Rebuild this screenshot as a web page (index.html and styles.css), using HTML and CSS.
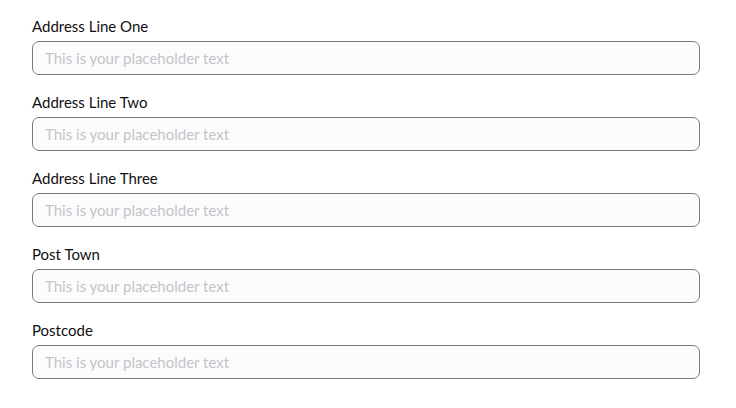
FILE: index.html
```html
<!DOCTYPE html>
<html>
<head>
<meta charset="utf-8">
<link rel="stylesheet" href="styles.css">
</head>
<body>
<form class="form">
  <div class="field">
    <label class="label">Address Line One</label>
    <input class="input" type="text" placeholder="This is your placeholder text">
  </div>
  <div class="field">
    <label class="label">Address Line Two</label>
    <input class="input" type="text" placeholder="This is your placeholder text">
  </div>
  <div class="field">
    <label class="label">Address Line Three</label>
    <input class="input" type="text" placeholder="This is your placeholder text">
  </div>
  <div class="field">
    <label class="label">Post Town</label>
    <input class="input" type="text" placeholder="This is your placeholder text">
  </div>
  <div class="field">
    <label class="label">Postcode</label>
    <input class="input" type="text" placeholder="This is your placeholder text">
  </div>
</form>
</body>
</html>
```
FILE: styles.css
```css
html, body {
  margin: 0;
  padding: 0;
  background: #ffffff;
}
body {
  font-family: Lato, "Noto Sans", "Liberation Sans", sans-serif;
  color: #1a1a1a;
}
.form {
  width: 668px;
  padding: 16px 32px;
  display: flex;
  flex-direction: column;
  gap: 17px;
}
.field {
  display: flex;
  flex-direction: column;
  gap: 5px;
}
.label {
  font-size: 15px;
  line-height: 20px;
  height: 20px;
  color: #111;
}
.input {
  box-sizing: border-box;
  width: 668px;
  height: 34px;
  margin: 0;
  border: 1px solid #7a7a7a;
  border-radius: 7px;
  background: #fcfcfc;
  padding: 0 12px;
  font-family: inherit;
  font-size: 15px;
  color: #111;
  outline: none;
}
.input::placeholder {
  color: #c4c4ca;
  opacity: 1;
}
```
